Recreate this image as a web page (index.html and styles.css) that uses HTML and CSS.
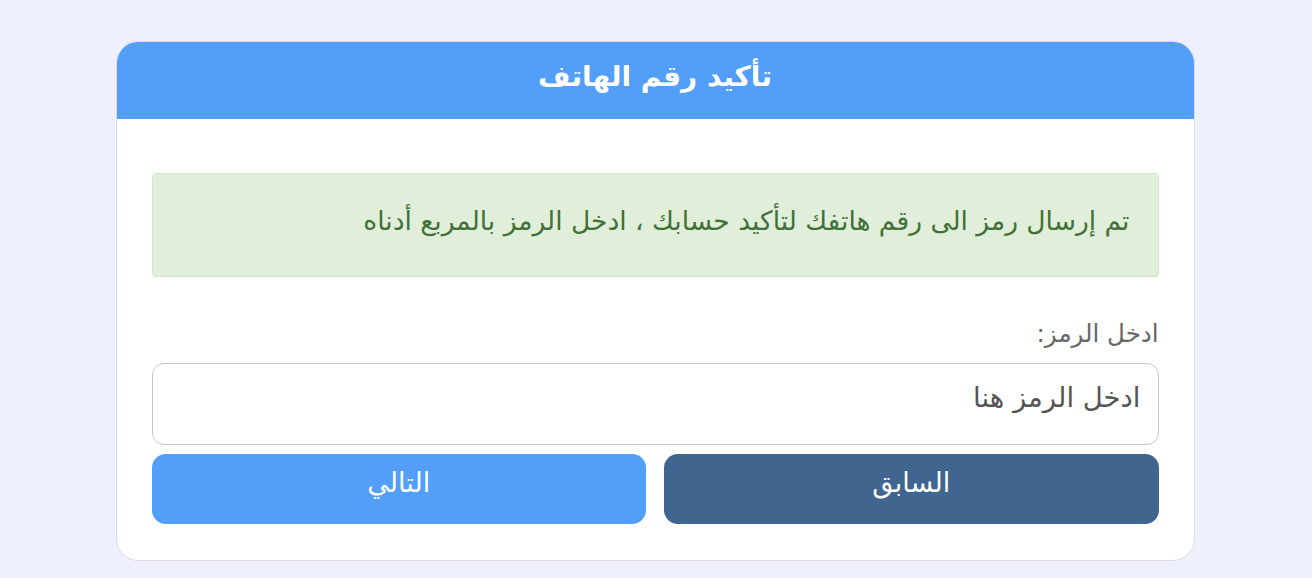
FILE: index.html
```html
<!DOCTYPE html>
<html lang="ar" dir="rtl">
<head>
<meta charset="utf-8">
<title>تأكيد رقم الهاتف</title>
<link rel="stylesheet" href="styles.css">
</head>
<body>
<main class="page">
  <section class="card">
    <header class="card-header">
      <h1 class="card-title">تأكيد رقم الهاتف</h1>
    </header>
    <div class="card-body">
      <div class="alert">تم إرسال رمز الى رقم هاتفك لتأكيد حسابك ، ادخل الرمز بالمربع أدناه</div>
      <form class="form">
        <label class="label" for="code">ادخل الرمز:</label>
        <input class="input" id="code" type="text" placeholder="ادخل الرمز هنا">
        <div class="actions">
          <button type="button" class="btn btn-prev">السابق</button>
          <button type="button" class="btn btn-next">التالي</button>
        </div>
      </form>
    </div>
  </section>
</main>
</body>
</html>
```

FILE: styles.css
```css
* { box-sizing: border-box; }
html, body { margin: 0; padding: 0; }
body {
  background: #eef1fd;
  font-family: "DejaVu Sans", "Noto Sans", sans-serif;
  direction: rtl;
}
.page {
  display: flex;
  justify-content: center;
  padding-top: 41px;
  padding-right: 2px;
}
.card {
  width: 1079px;
  background: #fff;
  border: 1px solid #dcdcdc;
  border-radius: 22px;
  overflow: hidden;
}
.card-header {
  background: #529ef8;
  height: 77px;
  display: flex;
  align-items: center;
  justify-content: center;
}
.card-title {
  margin: 0;
  color: #fff;
  font-size: 28px;
  font-weight: bold;
  padding-bottom: 8px;
}
.card-body {
  padding: 54px 35px 36px;
}
.alert {
  background: #e1efda;
  border: 1px solid #d3e6c8;
  border-radius: 4px;
  color: #3f7139;
  font-size: 26.5px;
  height: 104px;
  display: flex;
  align-items: center;
  padding: 0 28px 10px;
}
.form {
  display: flex;
  flex-direction: column;
  margin-top: 40px;
}
.label {
  color: #666;
  font-size: 24.5px;
  line-height: 34px;
  margin-bottom: 12px;
}
.input {
  height: 82px;
  border: 1px solid #c8c8c8;
  border-radius: 12px;
  padding: 0 17px 14px;
  font-family: inherit;
  font-size: 27.5px;
  color: #444;
  background: #fff;
  outline: none;
}
.input::placeholder { color: #555; }
.actions {
  display: flex;
  gap: 18px;
  margin-top: 9px;
}
.btn {
  flex: 1;
  height: 70px;
  border: none;
  border-radius: 14px;
  color: #fff;
  font-family: inherit;
  font-size: 27px;
  padding-bottom: 14px;
}
.btn-prev { background: #40658f; }
.btn-next { background: #529ef8; }
```
